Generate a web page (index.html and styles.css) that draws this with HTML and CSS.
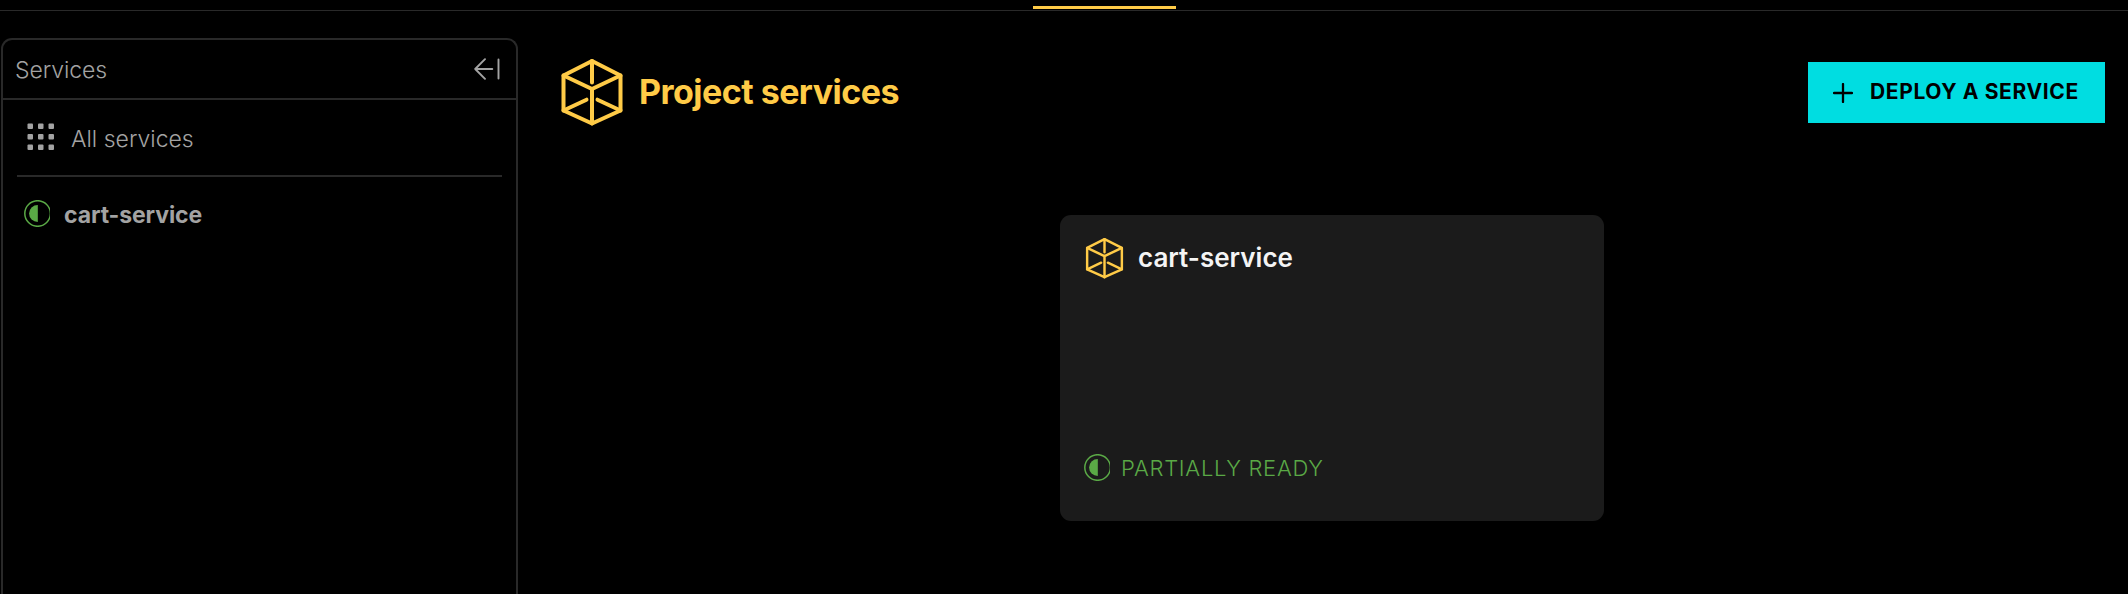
FILE: index.html
```html
<!DOCTYPE html>
<html lang="en">
<head>
<meta charset="utf-8">
<title>Project services</title>
<link rel="stylesheet" href="styles.css">
</head>
<body>
<svg class="symbols" aria-hidden="true">
  <symbol id="cube" viewBox="0 0 64 68">
    <g fill="none" stroke="currentColor" stroke-width="4" stroke-linecap="round" stroke-linejoin="round">
      <path d="M32 3 60.5 17.5V52.5L32 65.5 3.500 52.500V17.500Z"/>
      <path d="M3.500 17.500 32 31 60.500 17.500M32 31V65.500M32 3V24.500M3.500 52.500 26.500 41.700M60.500 52.500 37.500 41.700"/>
    </g>
  </symbol>
  <symbol id="partial" viewBox="0 0 26 27">
    <circle cx="13.600" cy="13.500" r="12.800" fill="none" stroke="currentColor" stroke-width="1.500"/>
    <path d="M13.800 5V22A8.700 8.500 0 0 1 13.800 5Z" fill="currentColor"/>
  </symbol>
</svg>
<nav class="tabs"><span class="tab-active"></span></nav>
<div class="layout">
  <aside class="sidebar">
    <header class="sidebar-head">
      <span class="sidebar-title">Services</span>
      <svg class="collapse" viewBox="0 0 26 22" fill="none" stroke="currentColor" stroke-width="1.900" stroke-linecap="round" stroke-linejoin="round"><path d="M11 1.200 1.200 11 11 20.800M1.200 11H18.300M24.500 1.500V20.500"/></svg>
    </header>
    <a class="all-services">
      <svg class="grid-icon" viewBox="0 0 28 28" fill="currentColor">
        <rect x="0.500" y="0.500" width="5.500" height="5.500" rx="1"/><rect x="11" y="0.500" width="5.500" height="5.500" rx="1"/><rect x="21.500" y="0.500" width="5.500" height="5.500" rx="1"/>
        <rect x="0.500" y="11" width="5.500" height="5.500" rx="1"/><rect x="11" y="11" width="5.500" height="5.500" rx="1"/><rect x="21.500" y="11" width="5.500" height="5.500" rx="1"/>
        <rect x="0.500" y="21.500" width="5.500" height="5.500" rx="1"/><rect x="11" y="21.500" width="5.500" height="5.500" rx="1"/><rect x="21.500" y="21.500" width="5.500" height="5.500" rx="1"/>
      </svg>
      <span class="all-label">All services</span>
    </a>
    <a class="service-link">
      <svg class="status-icon"><use href="#partial"/></svg>
      <span class="service-name">cart-service</span>
    </a>
  </aside>
  <main class="content">
    <header class="page-head">
      <svg class="page-icon"><use href="#cube"/></svg>
      <h1 class="page-title">Project services</h1>
      <button class="deploy">
        <svg class="plus" viewBox="0 0 20 20" fill="none" stroke="currentColor" stroke-width="2.300" stroke-linecap="round"><path d="M10 1V19M1 10H19"/></svg>
        <span class="deploy-label">DEPLOY A SERVICE</span>
      </button>
    </header>
    <section class="card">
      <div class="card-head">
        <svg class="card-icon"><use href="#cube"/></svg>
        <h2 class="card-title">cart-service</h2>
      </div>
      <div class="card-status">
        <svg class="status-icon"><use href="#partial"/></svg>
        <span class="status-label">PARTIALLY READY</span>
      </div>
    </section>
  </main>
</div>
</body>
</html>
```

FILE: styles.css
```css
* { box-sizing: border-box; }
body {
  margin: 0;
  height: 594px;
  display: flex;
  flex-direction: column;
  background: #000;
  color: #a3a3a3;
  font-family: Inter, "Liberation Sans", sans-serif;
  font-size: 23px;
  font-weight: 300;
}
span, h1, h2 { white-space: nowrap; }
svg { display: block; flex: none; }
.symbols { display: none; }

.tabs {
  flex: none;
  height: 11px;
  padding: 6px 0 0 1033px;
  border-bottom: 1px solid #292929;
}
.tab-active { display: block; width: 143px; height: 3px; background: #ffcb47; }

.layout { flex: none; height: 583px; display: flex; }

.sidebar {
  flex: none;
  width: 517px;
  margin: 27px 0 0 1px;
  border: 2px solid #292929;
  border-bottom: 0;
  border-radius: 11px 11px 0 0;
}
.sidebar-head {
  height: 60px;
  padding: 0 16px 0 12px;
  display: flex;
  align-items: center;
  justify-content: space-between;
  border-bottom: 2px solid #292929;
}
.sidebar-title { line-height: 28px; padding-top: 1px; letter-spacing: -0.1px; }
.collapse { width: 26px; height: 22px; }
.all-services {
  height: 77px;
  margin: 0 14px;
  padding-left: 10px;
  display: flex;
  align-items: center;
  gap: 16px;
  border-bottom: 2px solid #292929;
}
.grid-icon { width: 28px; height: 28px; margin-bottom: 1px; }
.all-label { line-height: 28px; padding-top: 3px; }
.service-link {
  height: 74px;
  padding-left: 21px;
  display: flex;
  align-items: center;
  gap: 14px;
}
.status-icon { width: 26px; height: 27px; color: #5aa946; }
.service-link .status-icon { margin-bottom: 1px; }
.service-name { font-weight: 650; line-height: 28px; padding-top: 2px; letter-spacing: -0.1px; }

.content { flex: 1; padding: 43px 23px 0 42px; }
.page-head { height: 76px; display: flex; align-items: center; }
.page-icon { width: 64px; height: 68px; color: #ffcb47; }
.page-title {
  margin: 0 auto 0 15px;
  color: #ffcb47;
  font-size: 34px;
  font-weight: 650;
  line-height: 42px;
  letter-spacing: -0.53px;
}
.deploy {
  width: 297px;
  height: 61px;
  padding: 0 0 0 25px;
  border: 0;
  display: flex;
  align-items: center;
  gap: 17px;
  background: #00dde1;
  color: #000;
  font: 650 21px/26px Inter, "Liberation Sans", sans-serif;
  letter-spacing: 0.63px;
}
.plus { width: 20px; height: 20px; margin-top: 2px; }
.deploy-label { padding-bottom: 1px; }

.card {
  width: 544px;
  height: 306px;
  margin: 85px 0 0 500px;
  padding: 22px 24px 40px;
  display: flex;
  flex-direction: column;
  justify-content: space-between;
  border-radius: 11px;
  background: #1b1b1b;
}
.card-head, .card-status { display: flex; align-items: center; }
.card-head { gap: 14px; padding-left: 1px; }
.card-icon { width: 39px; height: 42px; color: #ffcb47; }
.card-title {
  margin: 0;
  color: #f4f4f4;
  font-size: 26px;
  font-weight: 600;
  line-height: 32px;
}
.card-status { height: 27px; gap: 11px; color: #5aa946; }
.status-label { line-height: 27px; padding-top: 2px; font-size: 22px; letter-spacing: 0.73px; }
```
